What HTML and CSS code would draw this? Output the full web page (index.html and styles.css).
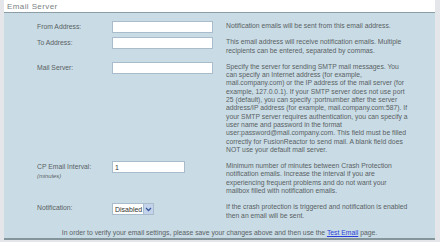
FILE: index.html
```html
<!DOCTYPE html>
<html lang="en">
<head>
    <meta charset="UTF-8">
    <title>Email Server</title>
    <link rel="stylesheet" href="styles.css">
</head>
<body>
    <div class="panel">
        <div class="panel-title">Email Server</div>

        <div class="panel-body">
            <div class="row">
                <div class="label">From Address:</div>
                <div class="field"><input class="text-input" type="text"></div>
                <div class="desc">Notification emails will be sent from this email address.</div>
            </div>

            <div class="row">
                <div class="label">To Address:</div>
                <div class="field"><input class="text-input" type="text"></div>
                <div class="desc">This email address will receive notification emails. Multiple recipients can be entered, separated by commas.</div>
            </div>

            <div class="row">
                <div class="label">Mail Server:</div>
                <div class="field"><input class="text-input" type="text"></div>
                <div class="desc">Specify the server for sending SMTP mail messages. You can specify an Internet address (for example, mail.company.com) or the IP address of the mail server (for example, 127.0.0.1). If your SMTP server does not use port 25 (default), you can specify :portnumber after the server address/IP address (for example, mail.company.com:587). If your SMTP server requires authentication, you can specify a user name and password in the format user:password@mail.company.com. This field must be filled correctly for FusionReactor to send mail. A blank field does NOT use your default mail server.</div>
            </div>

            <div class="row">
                <div class="label">CP Email Interval:<span class="unit">(minutes)</span></div>
                <div class="field"><input class="text-input short" type="text" value="1"></div>
                <div class="desc">Minimum number of minutes between Crash Protection notification emails. Increase the interval if you are experiencing frequent problems and do not want your mailbox filled with notification emails.</div>
            </div>

            <div class="row">
                <div class="label">Notification:</div>
                <div class="field">
                    <div class="select">
                        <span class="select-value">Disabled</span>
                        <span class="select-arrow">
                            <svg width="7" height="5" viewBox="0 0 7 5"><path d="M1 1 L3.5 3.5 L6 1" fill="none" stroke="#3a5a9c" stroke-width="1.3"/></svg>
                        </span>
                    </div>
                </div>
                <div class="desc">If the crash protection is triggered and notification is enabled then an email will be sent.</div>
            </div>

            <div class="footer-note">In order to verify your email settings, please save your changes above and then use the <a href="#">Test Email</a> page.</div>
        </div>
    </div>
</body>
</html>
```

FILE: styles.css
```css
body {
    margin: 0;
    background-color: #e4e6ea;
    font-family: "Liberation Sans", Arial, sans-serif;
    color: #5a5f63;
}

.panel {
    margin: 0 5px 0 4px;
    background-color: #ffffff;
}

.panel-title {
    height: 12px;
    line-height: 13px;
    padding-left: 3px;
    font-size: 8px;
    letter-spacing: 0.4px;
    color: #7a7f83;
    background-color: #ffffff;
    border-bottom: 1px solid #8b9ea8;
}

.panel-body {
    background-color: #c9dce6;
    padding: 8px 5px 0 33px;
    border-bottom: 2px solid #84959c;
}

.row {
    display: grid;
    grid-template-columns: 75px 114px 185px;
    align-items: start;
}

.label {
    font-size: 6.8px;
    line-height: 12px;
}

.unit {
    display: block;
    font-size: 5.8px;
    font-style: italic;
    line-height: 6px;
}

.field {
    display: flex;
}

.text-input {
    display: block;
    box-sizing: border-box;
    width: 101px;
    height: 12px;
    margin: 0;
    padding: 0 2px;
    border: 1px solid #a9bccb;
    background-color: #ffffff;
    font-family: "Liberation Sans", Arial, sans-serif;
    font-size: 7px;
    color: #333;
    outline: none;
}

.short {
    width: 73px;
}

.desc {
    font-size: 6.8px;
    line-height: 8.3px;
    padding: 1px 0 7px;
}

.select {
    display: flex;
    align-items: center;
    box-sizing: border-box;
    width: 42px;
    height: 12px;
    margin-top: 1px;
    border: 1px solid #a9bccb;
    background-color: #ffffff;
    font-size: 7px;
    color: #333;
}

.select-value {
    flex: 1;
    padding-left: 2px;
}

.select-arrow {
    display: flex;
    align-items: center;
    justify-content: center;
    width: 9px;
    height: 10px;
    background-color: #c3d3ec;
    border-left: 1px solid #a9bccb;
}

.footer-note {
    margin-left: -28px;
    text-align: center;
    font-size: 6.8px;
    line-height: 8.3px;
    padding: 2px 0 1px;
}

.footer-note a {
    color: #2b3fd8;
}
```
